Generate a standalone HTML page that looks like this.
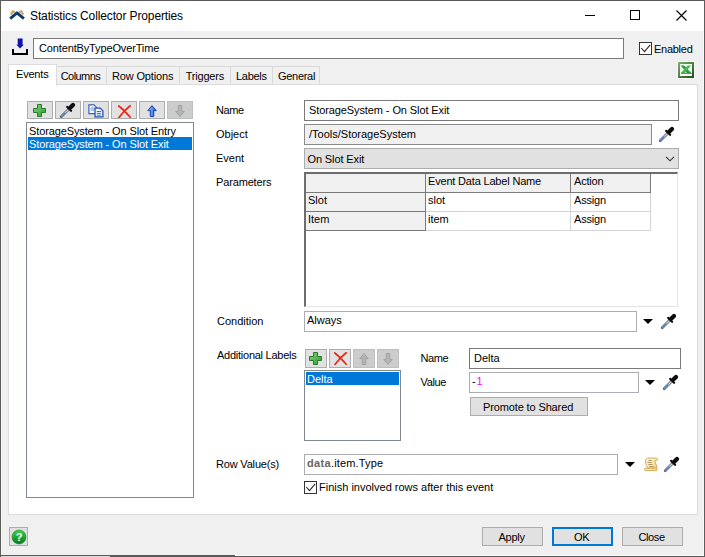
<!DOCTYPE html>
<html><head><meta charset="utf-8">
<style>
html,body{margin:0;padding:0;}
body{width:705px;height:557px;position:relative;overflow:hidden;background:#f0f0f0;font-family:"Liberation Sans",sans-serif;font-size:11px;color:#000;}
.a{position:absolute;box-sizing:border-box;white-space:nowrap;}
.t{position:absolute;white-space:nowrap;line-height:14px;height:14px;}
.inp{position:absolute;box-sizing:border-box;background:#fff;border:1px solid #7a7a7a;}
.inl{position:absolute;box-sizing:border-box;background:#fff;border:1px solid #abadb3;}
.btn{position:absolute;box-sizing:border-box;background:#e1e1e1;border:1px solid #adadad;}
.dis{background:#cccccc;border-color:#bfbfbf;}
.tab{position:absolute;box-sizing:border-box;top:66px;height:19px;background:#f0f0f0;border:1px solid #d9d9d9;border-bottom:none;}
.cell{position:absolute;box-sizing:border-box;}
</style></head><body>
<svg width="0" height="0" style="position:absolute"><defs>
<linearGradient id="gplus" x1="0" y1="0" x2="1" y2="1"><stop offset="0" stop-color="#86d480"/><stop offset="1" stop-color="#2f9a30"/></linearGradient>
<linearGradient id="gup" x1="0" y1="0" x2="1" y2="0"><stop offset="0" stop-color="#8cc0ff"/><stop offset="1" stop-color="#1f5fe0"/></linearGradient>
<linearGradient id="gscroll" x1="0" y1="0" x2="1" y2="1"><stop offset="0" stop-color="#fffbe8"/><stop offset="0.5" stop-color="#fcecc0"/><stop offset="1" stop-color="#f6c86c"/></linearGradient>
<linearGradient id="gxl" x1="0" y1="0" x2="1" y2="1"><stop offset="0" stop-color="#78aa6c"/><stop offset="1" stop-color="#23551c"/></linearGradient>
<linearGradient id="ghelp" x1="0" y1="0" x2="0" y2="1"><stop offset="0" stop-color="#3fd04a"/><stop offset="1" stop-color="#077a1c"/></linearGradient>
<g id="dropper">
<path d="M2.2 15.8 L10 8" stroke="#5e6776" stroke-width="2.8" stroke-linecap="round"/>
<path d="M2.6 15.4 L9.5 8.5" stroke="#d0dae8" stroke-width="1.1" stroke-linecap="round"/>
<path d="M2.6 15.4 L6 12" stroke="#5088d0" stroke-width="1.2" stroke-linecap="round"/>
<path d="M8.2 5.9 L12.1 9.8" stroke="#0c0c0c" stroke-width="2.2" stroke-linecap="round"/>
<path d="M11.4 6.6 L14 4" stroke="#0c0c0c" stroke-width="4.3" stroke-linecap="round"/>
</g>
<g id="plus"><path d="M4.5 0.5 h4 v4 h4 v4 h-4 v4 h-4 v-4 h-4 v-4 h4 z" fill="url(#gplus)" stroke="#2a7a2a" stroke-width="1"/></g>
<g id="redx"><path d="M0.8 1 C4 3.5 8 7.5 12.2 12.2 M12.2 0.8 C8 4 4 8.5 1 12.5" stroke="#ee2414" stroke-width="1.7" fill="none" stroke-linecap="round"/></g>
<g id="uparr"><path d="M4.75 0.6 L9 5.6 H6.5 V11.5 H3 V5.6 H0.5 Z"/></g>
<g id="dnarr"><path d="M4.75 11.4 L9 6.4 H6.5 V0.5 H3 V6.4 H0.5 Z"/></g>
</defs></svg>
<!-- window frame -->
<div class="a" style="left:0;top:0;width:705px;height:1px;background:#5a5a5a;"></div>
<div class="a" style="left:0;top:0;width:1px;height:557px;background:#5c5c58;"></div>
<div class="a" style="left:1px;top:31px;width:1px;height:524px;background:#f9f9f9;"></div>
<div class="a" style="left:703px;top:31px;width:1px;height:524px;background:#f9f9f9;"></div>
<div class="a" style="left:704px;top:0;width:1px;height:557px;background:#5c5c5c;"></div>
<div class="a" style="left:235px;top:555px;width:469px;height:1px;background:#fafafa;"></div>
<div class="a" style="left:0;top:555px;width:235px;height:1px;background:#5a5a5a;"></div>
<div class="a" style="left:110px;top:556px;width:595px;height:1px;background:#5a5a5a;"></div>
<div class="a" style="left:1px;top:556px;width:109px;height:1px;background:#d8d8d8;"></div>
<!-- title bar -->
<div class="a" style="left:1px;top:1px;width:703px;height:30px;background:#fff;"></div>
<svg class="a" style="left:8px;top:9px" width="18" height="12" viewBox="8 9 18 12">
<path d="M10.8 14.8 L12.6 11.2 L15 12 M23.2 14.8 L21.4 11.2 L19 12" fill="none" stroke="#cdaa72" stroke-width="2.2" stroke-linejoin="round"/>
<path d="M10.2 18.6 L17 12.8 L23.9 18.6" fill="none" stroke="#0e3a72" stroke-width="2.9" stroke-linejoin="round"/>
</svg>
<div class="t" style="left:30px;top:9px;font-size:12px;letter-spacing:-0.12px;">Statistics Collector Properties</div>
<!-- window controls -->
<div class="a" style="left:585px;top:15px;width:10px;height:1px;background:#000;"></div>
<div class="a" style="left:630px;top:10px;width:10px;height:10px;border:1px solid #000;"></div>
<svg class="a" style="left:676px;top:10px" width="11" height="11" viewBox="0 0 11 11"><path d="M0.5 0.5 L10.5 10.5 M10.5 0.5 L0.5 10.5" stroke="#000" stroke-width="1.15" fill="none"/></svg>

<!-- name row -->
<svg class="a" style="left:11px;top:38px" width="18" height="18" viewBox="11 38 18 18">
<path d="M17.7 38.6 h4.9 v6.1 h1.2 l-3.7 3.9 l-3.7 -3.9 h1.3 z" fill="#1212b4"/>
<path d="M13 49 v5 h14 v-5" fill="none" stroke="#000" stroke-width="2"/>
</svg>
<div class="inp" style="left:33px;top:38px;width:591px;height:21px;"></div>
<div class="t" style="left:39px;top:41px;letter-spacing:-0.14px;">ContentByTypeOverTime</div>
<div class="a" style="left:639px;top:42px;width:13px;height:13px;border:1px solid #333;background:#fff;"></div>
<svg class="a" style="left:640px;top:43px" width="11" height="11" viewBox="0 0 11 11"><path d="M1.3 5 L4.5 8.6 L10.2 1.9" stroke="#2a2a2a" stroke-width="1.1" fill="none"/></svg>
<div class="t" style="left:654px;top:42px;letter-spacing:-0.27px;">Enabled</div>

<!-- excel icon -->
<svg class="a" style="left:677px;top:61px" width="18" height="18" viewBox="-1 -1 18 18">
<rect x="-0.5" y="-0.5" width="17" height="17" fill="none" stroke="#fafafa" stroke-width="1"/>
<rect x="1" y="1" width="14" height="14" fill="#f2f9f0" stroke="url(#gxl)" stroke-width="2"/>
<path d="M2.6 3.4 H6.2 L13.2 11 H9 Z" fill="#2f9a40"/>
<path d="M13 3.4 H9.6 L3 11 H6.6 Z" fill="#4db458"/>
<path d="M3 11.3 H13.6" stroke="#2a6a2a" stroke-width="0.9"/>
</svg>

<!-- tabs -->
<div class="tab" style="left:56px;width:51px;"></div>
<div class="tab" style="left:106px;width:74px;"></div>
<div class="tab" style="left:179px;width:52px;"></div>
<div class="tab" style="left:230px;width:43px;"></div>
<div class="tab" style="left:272px;width:48px;"></div>
<div class="t" style="left:60.7px;top:69px;letter-spacing:-0.55px;">Columns</div>
<div class="t" style="left:112px;top:69px;letter-spacing:-0.15px;">Row Options</div>
<div class="t" style="left:185.7px;top:69px;letter-spacing:-0.2px;">Triggers</div>
<div class="t" style="left:236px;top:69px;letter-spacing:-0.3px;">Labels</div>
<div class="t" style="left:278px;top:69px;letter-spacing:-0.3px;">General</div>
<!-- panel -->
<div class="a" style="left:8px;top:84px;width:690px;height:431px;background:#fff;border:1px solid #dcdcdc;"></div>
<div class="a" style="left:8px;top:64px;width:49px;height:22px;background:#fff;border:1px solid #dcdcdc;border-bottom:none;"></div>
<div class="t" style="left:16px;top:67px;letter-spacing:-0.2px;">Events</div>

<!-- left toolbar -->
<div class="btn" style="left:27px;top:101px;width:26px;height:18px;"></div>
<div class="btn" style="left:55px;top:101px;width:26px;height:18px;"></div>
<div class="btn" style="left:83px;top:101px;width:26px;height:18px;"></div>
<div class="btn" style="left:111px;top:101px;width:26px;height:18px;"></div>
<div class="btn" style="left:139px;top:101px;width:26px;height:18px;"></div>
<div class="btn dis" style="left:167px;top:101px;width:26px;height:18px;"></div>
<svg class="a" style="left:33px;top:104px" width="13" height="13" viewBox="0 0 13 13"><use href="#plus"/></svg>
<svg class="a" style="left:59px;top:101px" width="18" height="18" viewBox="0 0 18 18"><use href="#dropper"/></svg>
<!-- copy -->
<svg class="a" style="left:88px;top:104px" width="16" height="14" viewBox="0 0 16 14">
<path d="M0.9 0.9 H6 L8.5 3.4 V9.6 H0.9 Z" fill="#fff" stroke="#2f62c4" stroke-width="1.2"/>
<path d="M2.5 4 h4 M2.5 6 h4" stroke="#5a8ae0" stroke-width="1"/>
<path d="M7 4.2 H12.2 L14.9 6.9 V12.8 H7 Z" fill="#fff" stroke="#1f4fb4" stroke-width="1.3"/>
<path d="M8.7 7.5 h4.5 M8.7 9.3 h4.5 M8.7 11.1 h4.5" stroke="#3a6ad0" stroke-width="1"/>
</svg>
<svg class="a" style="left:117.5px;top:104.5px" width="13" height="13" viewBox="0 0 13 13"><use href="#redx"/></svg>
<svg class="a" style="left:147px;top:105px" width="10" height="12" viewBox="0 0 9.5 12"><use href="#uparr" fill="url(#gup)" stroke="#1a3fa8" stroke-width="1"/></svg>
<svg class="a" style="left:175px;top:105px" width="10" height="12" viewBox="0 0 9.5 12"><use href="#dnarr" fill="#b4b4b4" stroke="#a2a2a2" stroke-width="1"/></svg>

<!-- left list -->
<div class="inp" style="left:26px;top:122px;width:168px;height:376px;border-color:#828790;"></div>
<div class="t" style="left:29px;top:124px;letter-spacing:-0.12px;">StorageSystem - On Slot Entry</div>
<div class="a" style="left:28px;top:137px;width:164px;height:13px;background:#0078d7;"></div>
<div class="t" style="left:29px;top:137px;color:#fff;letter-spacing:-0.12px;">StorageSystem - On Slot Exit</div>

<!-- form -->
<div class="t" style="left:216px;top:103px;letter-spacing:-0.4px;">Name</div>
<div class="inp" style="left:304px;top:100px;width:375px;height:21px;"></div>
<div class="t" style="left:309px;top:103px;letter-spacing:-0.1px;">StorageSystem - On Slot Exit</div>

<div class="t" style="left:216px;top:127px;">Object</div>
<div class="inp" style="left:304px;top:124px;width:348px;height:21px;background:#f0f0f0;border-color:#8a8a8a;"></div>
<div class="t" style="left:309px;top:127px;">/Tools/StorageSystem</div>
<svg class="a" style="left:658px;top:125px" width="18" height="18" viewBox="0 0 18 18"><use href="#dropper"/></svg>

<div class="t" style="left:216px;top:151px;">Event</div>
<div class="btn" style="left:304px;top:148px;width:375px;height:21px;"></div>
<div class="t" style="left:307.5px;top:152px;letter-spacing:-0.12px;">On Slot Exit</div>
<svg class="a" style="left:665px;top:156px" width="10" height="6" viewBox="0 0 10 6"><path d="M1 0.8 L5 4.8 L9 0.8" stroke="#333" stroke-width="1.1" fill="none"/></svg>

<div class="t" style="left:216px;top:175px;letter-spacing:-0.15px;">Parameters</div>
<!-- table -->
<div class="a" style="left:304px;top:172px;width:374px;height:135px;background:#fff;border-left:2px solid #6d6d6d;border-top:2px solid #6d6d6d;border-right:1px solid #e3e3e3;border-bottom:1px solid #e3e3e3;"></div>
<div class="cell" style="left:306px;top:174px;width:120px;height:19px;background:#f0f0f0;border-right:1px solid #7a7a7a;border-bottom:1px solid #7a7a7a;"></div>
<div class="cell" style="left:426px;top:174px;width:145px;height:19px;background:#f0f0f0;border-right:1px solid #7a7a7a;border-bottom:1px solid #7a7a7a;"></div>
<div class="cell" style="left:571px;top:174px;width:80px;height:19px;background:#f0f0f0;border-right:1px solid #7a7a7a;border-bottom:1px solid #7a7a7a;"></div>
<div class="cell" style="left:306px;top:193px;width:120px;height:19px;background:#f0f0f0;border-right:1px solid #7a7a7a;border-bottom:1px solid #7a7a7a;"></div>
<div class="cell" style="left:306px;top:212px;width:120px;height:19px;background:#f0f0f0;border-right:1px solid #7a7a7a;border-bottom:1px solid #7a7a7a;"></div>
<div class="cell" style="left:426px;top:193px;width:145px;height:19px;border-right:1px solid #d4d4d4;border-bottom:1px solid #d4d4d4;"></div>
<div class="cell" style="left:571px;top:193px;width:80px;height:19px;border-right:1px solid #d4d4d4;border-bottom:1px solid #d4d4d4;"></div>
<div class="cell" style="left:426px;top:212px;width:145px;height:19px;border-right:1px solid #d4d4d4;border-bottom:1px solid #d4d4d4;"></div>
<div class="cell" style="left:571px;top:212px;width:80px;height:19px;border-right:1px solid #d4d4d4;border-bottom:1px solid #d4d4d4;"></div>
<div class="t" style="left:428px;top:174px;letter-spacing:-0.18px;">Event Data Label Name</div>
<div class="t" style="left:574px;top:174px;letter-spacing:-0.2px;">Action</div>
<div class="t" style="left:308px;top:193px;">Slot</div>
<div class="t" style="left:428px;top:193px;">slot</div>
<div class="t" style="left:574px;top:193px;letter-spacing:-0.2px;">Assign</div>
<div class="t" style="left:308px;top:212px;">Item</div>
<div class="t" style="left:428px;top:212px;">item</div>
<div class="t" style="left:574px;top:212px;letter-spacing:-0.2px;">Assign</div>

<div class="t" style="left:217px;top:314px;">Condition</div>
<div class="inl" style="left:304px;top:311px;width:333px;height:21px;"></div>
<div class="t" style="left:307px;top:313px;">Always</div>
<svg class="a" style="left:643px;top:319px" width="10" height="5" viewBox="0 0 10 5"><path d="M0 0 H10 L5 5 Z" fill="#000"/></svg>
<svg class="a" style="left:660px;top:312px" width="18" height="18" viewBox="0 0 18 18"><use href="#dropper"/></svg>

<div class="t" style="left:217px;top:348px;letter-spacing:-0.25px;">Additional Labels</div>
<div class="btn" style="left:305px;top:349px;width:22px;height:19px;"></div>
<div class="btn" style="left:329px;top:349px;width:22px;height:19px;"></div>
<div class="btn dis" style="left:353px;top:349px;width:22px;height:19px;"></div>
<div class="btn dis" style="left:377px;top:349px;width:22px;height:19px;"></div>
<svg class="a" style="left:309px;top:352px" width="13" height="13" viewBox="0 0 13 13"><use href="#plus"/></svg>
<svg class="a" style="left:333.5px;top:352.3px" width="13" height="13" viewBox="0 0 13 13"><use href="#redx"/></svg>
<svg class="a" style="left:359px;top:353px" width="10" height="12" viewBox="0 0 9.5 12"><use href="#uparr" fill="#b4b4b4" stroke="#a2a2a2" stroke-width="1"/></svg>
<svg class="a" style="left:383px;top:353px" width="10" height="12" viewBox="0 0 9.5 12"><use href="#dnarr" fill="#b4b4b4" stroke="#a2a2a2" stroke-width="1"/></svg>
<div class="inp" style="left:304px;top:370px;width:97px;height:71px;border-color:#828790;"></div>
<div class="a" style="left:306px;top:372px;width:93px;height:13px;background:#0078d7;"></div>
<div class="t" style="left:307px;top:372px;color:#fff;">Delta</div>

<div class="t" style="left:420.5px;top:351px;letter-spacing:-0.4px;">Name</div>
<div class="inp" style="left:469px;top:348px;width:212px;height:21px;"></div>
<div class="t" style="left:474px;top:351px;">Delta</div>
<div class="t" style="left:420.5px;top:375px;letter-spacing:-0.35px;">Value</div>
<div class="inl" style="left:469px;top:372px;width:170px;height:21px;"></div>
<div class="t" style="left:472px;top:374px;"><span style="letter-spacing:0.7px">-</span><span style="color:#ff00ff">1</span></div>
<svg class="a" style="left:645px;top:380px" width="10" height="5" viewBox="0 0 10 5"><path d="M0 0 H10 L5 5 Z" fill="#000"/></svg>
<svg class="a" style="left:662px;top:373px" width="18" height="18" viewBox="0 0 18 18"><use href="#dropper"/></svg>
<div class="btn" style="left:470px;top:397px;width:118px;height:19px;"></div>
<div class="t" style="left:483px;top:400px;letter-spacing:-0.13px;">Promote to Shared</div>

<div class="t" style="left:216px;top:457px;letter-spacing:-0.18px;">Row Value(s)</div>
<div class="inl" style="left:304px;top:454px;width:314px;height:21px;"></div>
<div class="t" style="left:307px;top:456px;"><b style="color:#6a6560;letter-spacing:0.35px">data</b><span style="letter-spacing:0.15px">.item.Type</span></div>
<svg class="a" style="left:625px;top:462px" width="10" height="5" viewBox="0 0 10 5"><path d="M0 0 H10 L5 5 Z" fill="#000"/></svg>
<svg class="a" style="left:644px;top:457px" width="15" height="15" viewBox="0 0 15 15">
<path d="M3.5 1.1 H12.3 Q13.8 1.4 13.3 3 Q12.6 4 10.8 3.6 Q10.6 5 11.8 7 Q13 9 12.8 11.4 H4 Q3.6 9.5 2.6 8.4 Q1.2 6.5 1.5 4 Q1.8 1.6 3.5 1.1 Z" fill="url(#gscroll)" stroke="#c9a24a" stroke-width="0.9"/>
<rect x="0.5" y="11.2" width="12.6" height="2.4" rx="1.2" fill="#fbe7a8" stroke="#c9a24a" stroke-width="0.9"/>
<path d="M4.3 3.5 H7.9 M3.3 5.5 H7.9 M4.3 7.5 H8.6 M5.1 9.5 H9.8" stroke="#b59a62" stroke-width="1"/>
</svg>
<svg class="a" style="left:663px;top:455px" width="18" height="18" viewBox="0 0 18 18"><use href="#dropper"/></svg>
<div class="a" style="left:304px;top:481px;width:13px;height:13px;border:1px solid #333;background:#fff;"></div>
<svg class="a" style="left:305px;top:482px" width="11" height="11" viewBox="0 0 11 11"><path d="M1.3 5 L4.5 8.6 L10.2 1.9" stroke="#2a2a2a" stroke-width="1.1" fill="none"/></svg>
<div class="t" style="left:319px;top:480px;">Finish involved rows after this event</div>

<!-- bottom -->
<div class="btn" style="left:9px;top:527px;width:19px;height:19px;"></div>
<svg class="a" style="left:11px;top:529px" width="16" height="16" viewBox="0 0 16 16"><circle cx="8" cy="8" r="7" fill="url(#ghelp)" stroke="#0c8a22" stroke-width="0.6"/>
<text x="8" y="12" text-anchor="middle" font-family="Liberation Sans, sans-serif" font-weight="bold" font-size="11" fill="#fff">?</text></svg>
<div class="btn" style="left:482px;top:527px;width:61px;height:19px;"></div>
<div class="t" style="left:498.5px;top:530px;letter-spacing:-0.25px;">Apply</div>
<div class="btn" style="left:552px;top:527px;width:61px;height:19px;border:2px solid #0078d7;"></div>
<div class="t" style="left:574px;top:530px;letter-spacing:-0.2px;">OK</div>
<div class="btn" style="left:622px;top:527px;width:61px;height:19px;"></div>
<div class="t" style="left:638.5px;top:530px;letter-spacing:-0.4px;">Close</div>
</body></html>
